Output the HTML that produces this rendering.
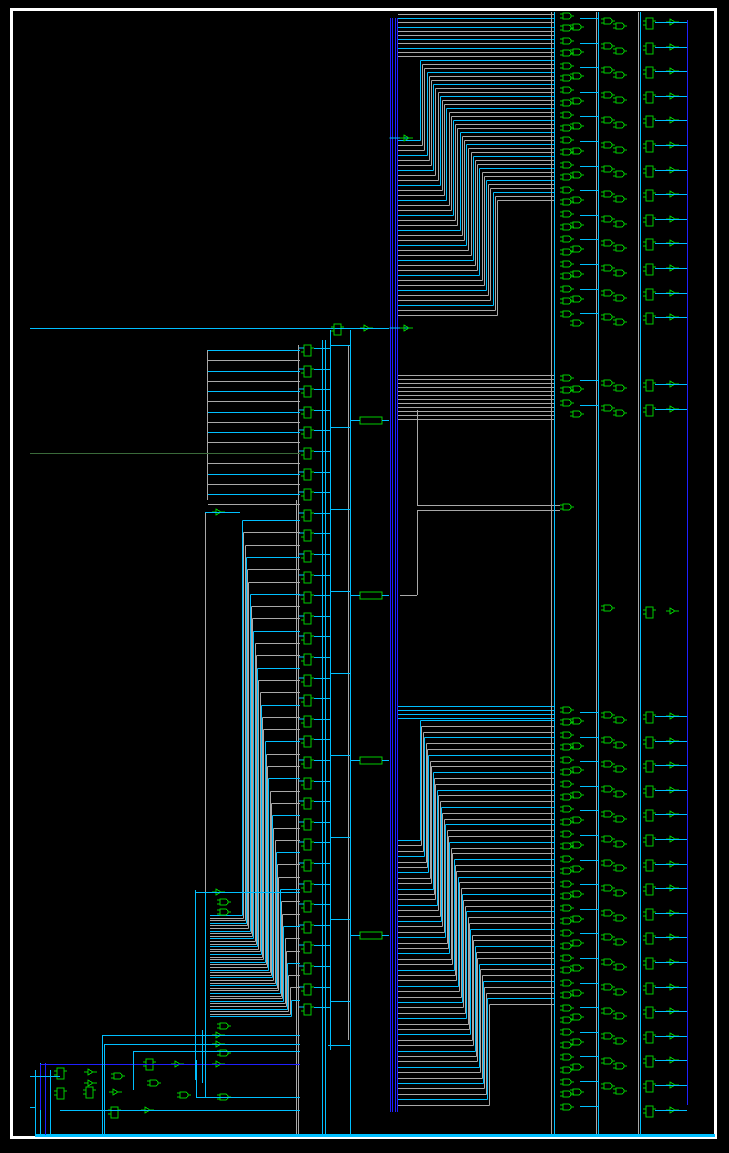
<!DOCTYPE html>
<html><head><meta charset="utf-8">
<style>
html,body{margin:0;padding:0;background:#000;width:729px;height:1153px;overflow:hidden}
svg{display:block}
</style></head>
<body>
<svg id="s" width="729" height="1153" xmlns="http://www.w3.org/2000/svg" shape-rendering="crispEdges">
<rect x="0" y="0" width="729" height="1153" fill="#000"/>
<rect x="11.5" y="9.5" width="704" height="1128" fill="none" stroke="#fff" stroke-width="3"/>
<g id="g"></g>
</svg>
<script>
var g=document.getElementById('g'),o='';
var C='#00bfff',B='#2020ff',G='#a8a8a8',N='#00cc00';
function L(x1,y1,x2,y2,c,w){o+='<line x1="'+x1+'" y1="'+y1+'" x2="'+x2+'" y2="'+y2+'" stroke="'+c+'" stroke-width="'+(w||1)+'"/>';}
function R(x,y,w,h,c){o+='<rect x="'+x+'" y="'+y+'" width="'+w+'" height="'+h+'" fill="none" stroke="'+c+'" stroke-width="1"/>';}
function gate(x,y){o+='<path d="M'+x+' '+(y-3)+'h5a3 3 0 0 1 0 6h-5z" fill="none" stroke="'+N+'"/>';L(x-3,y-2,x,y-2,N);L(x-3,y+2,x,y+2,N);L(x+8,y,x+11,y,N);}
function buf(x,y){o+='<path d="M'+x+' '+(y-3)+'l5 3l-5 3z" fill="none" stroke="'+N+'"/>';L(x-4,y,x,y,N);L(x+5,y,x+9,y,N);}
function ff(x,y){R(x,y,7,11,N);L(x-3,y+3,x,y+3,N);L(x-3,y+7,x,y+7,N);L(x+7,y+3,x+10,y+3,N);}
function fan(n,x0,dx,yt0,dyt,yb0,dyb,xl,xr){
  for(var i=0;i<n;i++){
    var x=Math.round(x0+i*dx)+.5,yt=Math.round(yt0+i*dyt)+.5,yb=Math.round(yb0+i*dyb)+.5;
    var c=(i%3==0)?C:G;
    L(x,yt,xr,yt,c);L(x,yt,x,yb,c);L(xl,yb,x,yb,c);
  }
}
for(var y=14;y<60;y+=4.2){var yy=Math.round(y)+.5;L(398,yy,555,yy,(Math.round(y)%3)?G:C);}
fan(36,420,2.2,60,4.0,140,5.0,398,555);
for(var y=375;y<420;y+=4){L(398,y+.5,555,y+.5,(y%8)?G:C);}
L(417.5,410,417.5,505,G);L(417,505.5,560,505.5,G);L(417.5,510,417.5,595,G);L(417,510.5,560,510.5,G);L(400,595.5,417,595.5,G);
for(var y=706;y<720;y+=4){L(398,y+.5,555,y+.5,C);}
fan(50,420,1.4,720,5.8,840,5.4,398,555);
[390,392,395,397].forEach(function(x){L(x+.5,18,x+.5,1112,B,1);});
L(389.5,138,410,138,C);L(389.5,328,410,328,C);
[551,554,596,598,638,640].forEach(function(x){L(x+.5,12,x+.5,1137,(x==554||x==598||x==640)?C:G,1);});
L(687.5,20,687.5,1105,B);
function gates(y0,y1){
  for(var y=y0;y<=y1;y+=12.4){gate(563,Math.round(y));}
  for(var y=y0+5;y<=y1;y+=24.7){gate(573,Math.round(y)+6);gate(604,Math.round(y));gate(616,Math.round(y)+5);}
  for(var y=y0+2;y<=y1;y+=24.6){ff(646,Math.round(y));buf(670,Math.round(y)+4);L(655,Math.round(y)+4.5,687,Math.round(y)+4.5,C);L(580,Math.round(y)+.5,598,Math.round(y)+.5,C);}
}
gates(16,325);gates(378,412);gate(563,507);gate(604,608);ff(646,607);buf(670,611);
gates(710,1108);
for(var y=345;y<1015;y+=20.6){var yy=Math.round(y);ff(304,yy);L(298.5,yy+3,304,yy+3,C);L(314,yy+3.5,330,yy+3.5,C);}
L(298.5,345,298.5,1135,G);L(296.5,500,296.5,1135,G);L(322.5,340,322.5,1135,C);L(325.5,340,325.5,1135,C);L(350.5,330,350.5,1135,C);L(348.5,345,348.5,1040,G);
for(var y=350;y<500;y+=20.6){var yy=Math.round(y)+.5;L(208,yy,300,yy,C);L(208,yy+10,300,yy+10,G);}
L(207.5,350,207.5,500,G);L(205.5,512,205.5,1080,G);
fan(40,242,1.25,520,12.3,915,2.6,210,300);
L(30,328.5,340,328.5,C);L(30,453.5,300,453.5,'#3a6a3a');
ff(334,324);buf(364,328);L(340,328.5,389,328.5,C);buf(216,512);L(205,512.5,240,512.5,C);
[420,595,760,935].forEach(function(y){R(360,y-3,22,7,N);L(350,y+.5,360,y+.5,C);L(382,y+.5,389,y+.5,C);});
buf(404,138);buf(404,328);
L(35,1135.5,715,1135.5,C,3);
L(35.5,1070,35.5,1135,C);L(40.5,1063,40.5,1135,C);L(45.5,1063,45.5,1135,B);L(50.5,1070,50.5,1135,C);
ff(57,1068);ff(57,1088);ff(86,1087);ff(146,1059);ff(111,1107);
gate(114,1076);gate(150,1083);gate(180,1095);gate(220,1026);gate(220,1053);gate(220,1097);
buf(88,1072);buf(88,1083);buf(113,1092);buf(145,1110);buf(175,1064);buf(216,1035);buf(216,1044);buf(216,1064);buf(216,892);gate(220,902);gate(220,912);
L(102,1035.5,300,1035.5,C);L(104,1044.5,300,1044.5,C);L(133,1051.5,300,1051.5,C);L(40,1064.5,300,1064.5,B);L(40.5,1064,40.5,1110,B);
L(102.5,1035,102.5,1135,C);L(104.5,1044,104.5,1135,C);L(133.5,1051,133.5,1090,C);L(196.5,1060,196.5,1097,C);L(202.5,1030,202.5,1083,C);
L(195.5,890,195.5,1080,C);L(205.5,893,205.5,1097,C);L(196,892.5,300,892.5,C);
L(60,1110.5,300,1110.5,C);L(196,1097.5,300,1097.5,C);L(30,1076.5,60,1076.5,C);L(30,1107.5,35,1107.5,C);
for(var y=345;y<1010;y+=82){L(330,y+.5,350,y+.5,C);}
L(330.5,330,330.5,1050,C);L(328,1045.5,350,1045.5,C);
g.innerHTML=o;
</script>
</body></html>
